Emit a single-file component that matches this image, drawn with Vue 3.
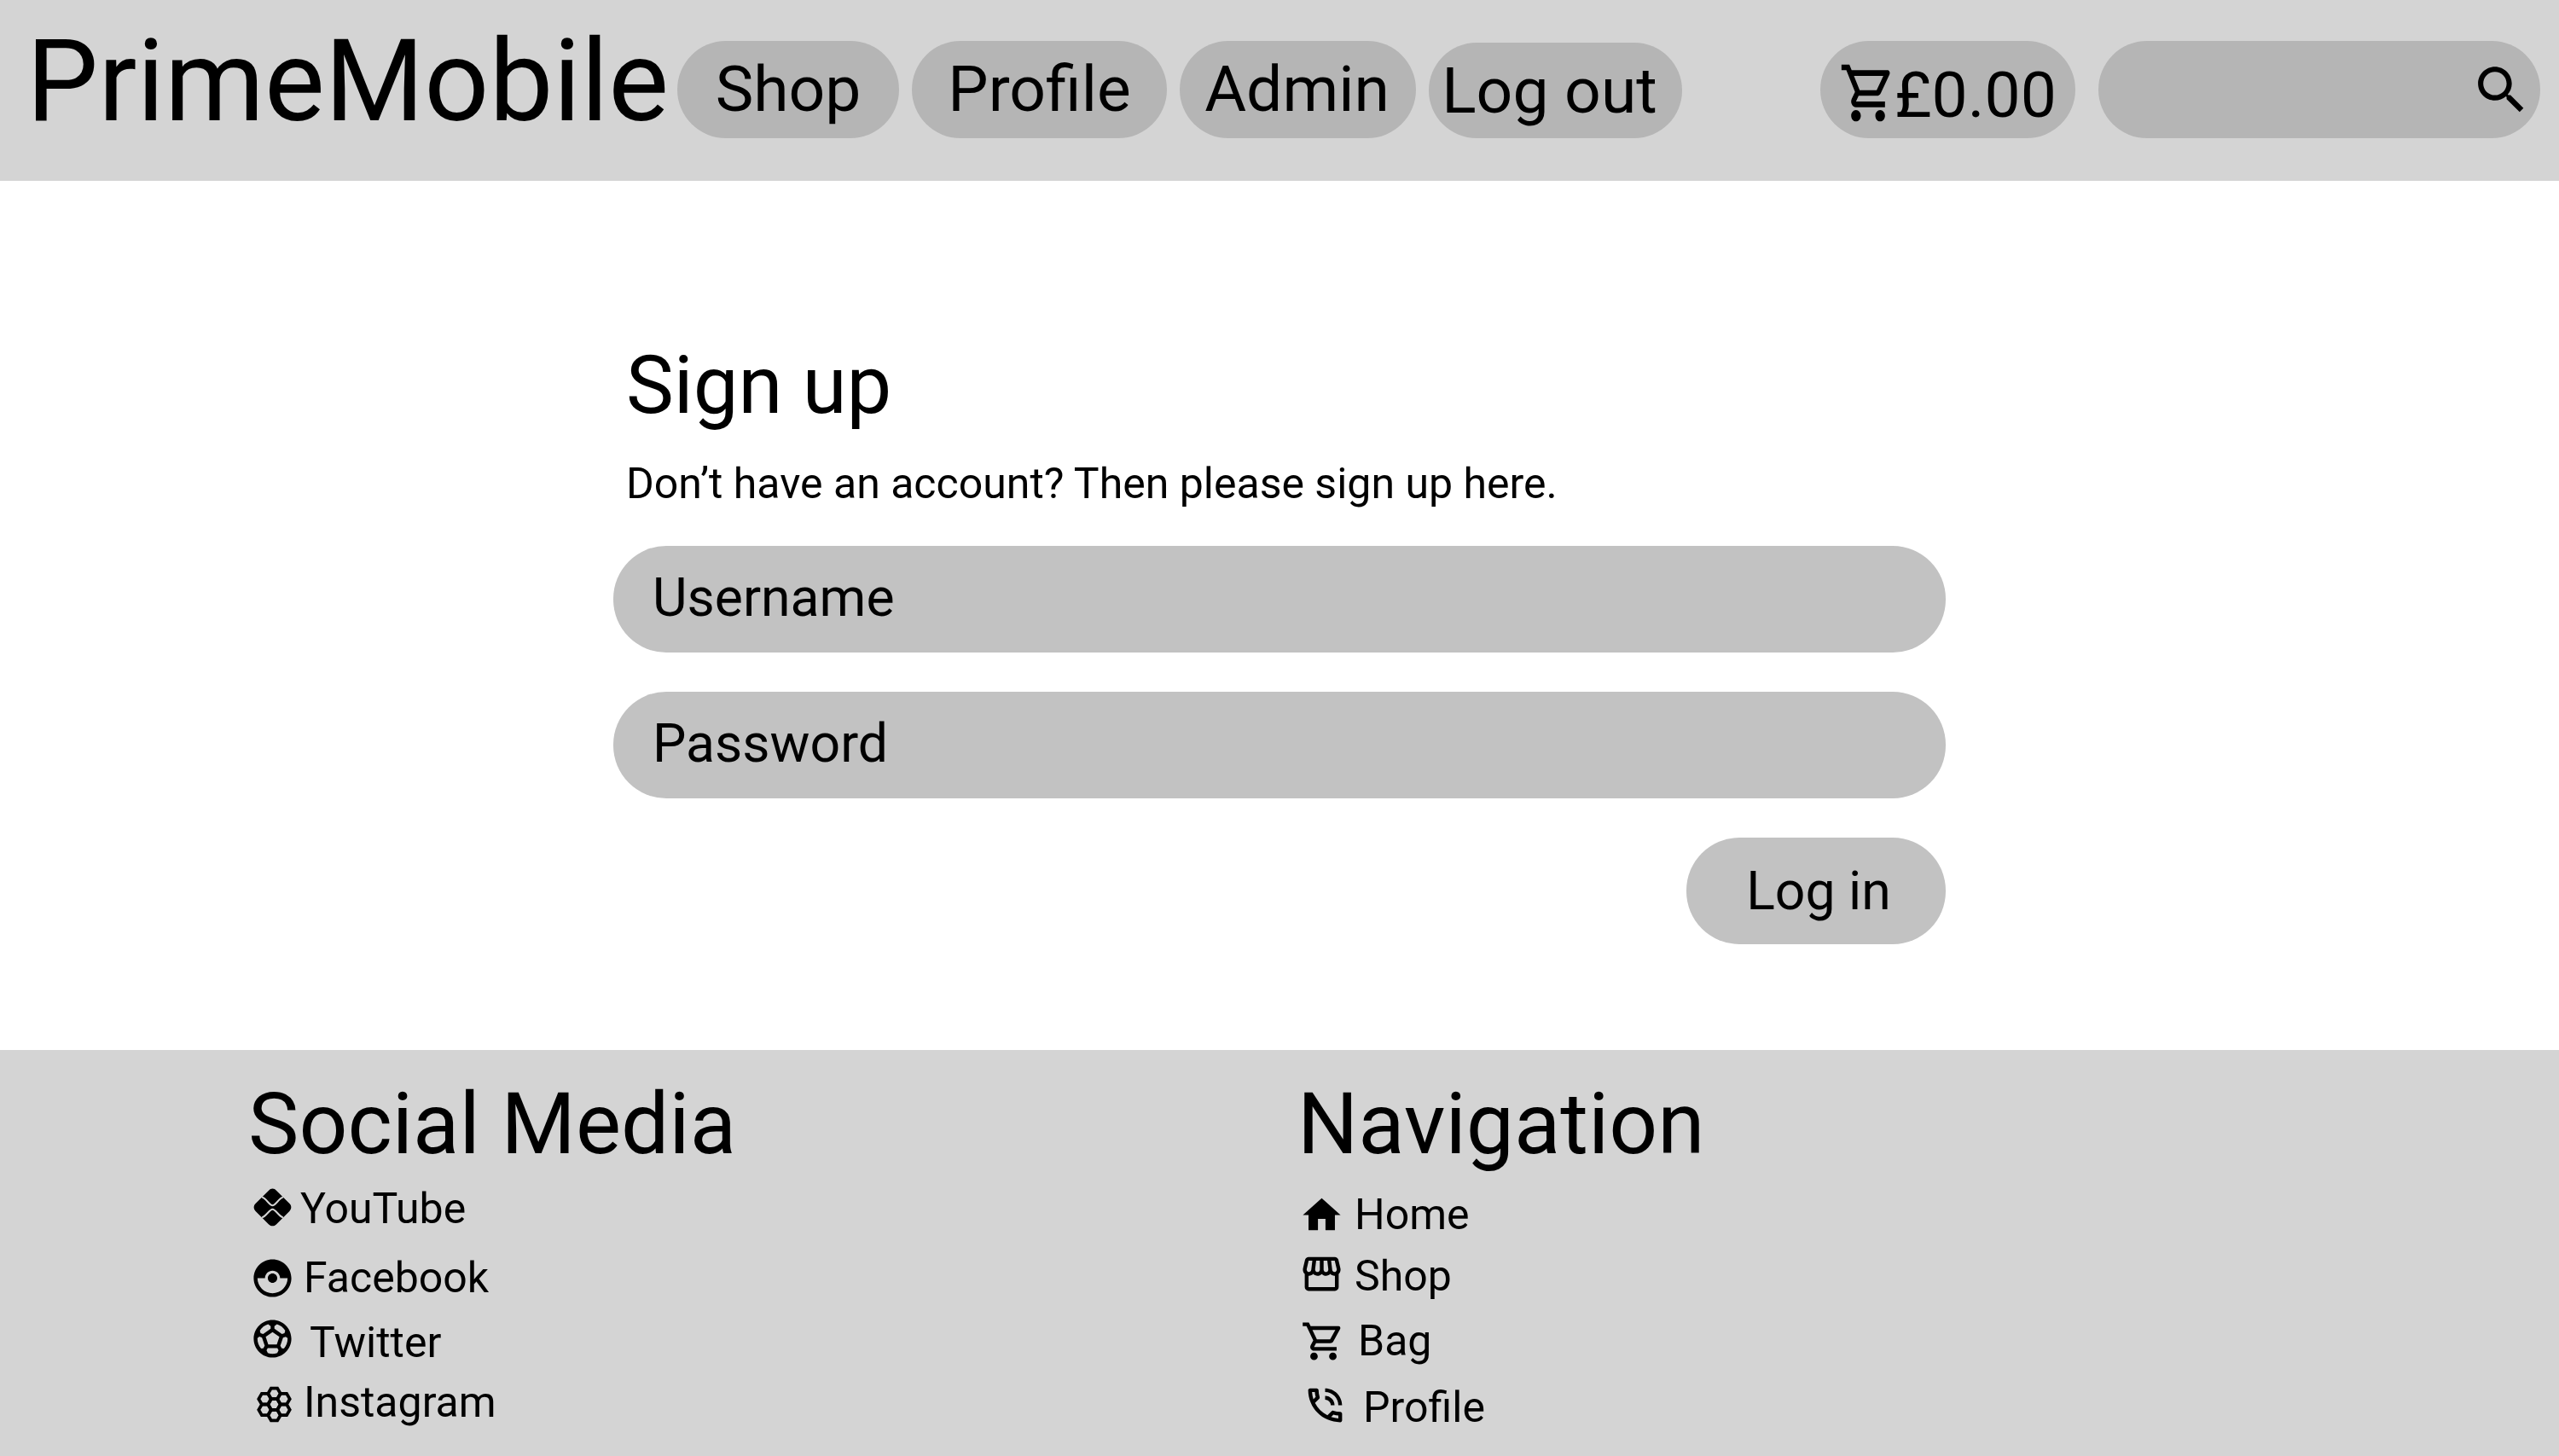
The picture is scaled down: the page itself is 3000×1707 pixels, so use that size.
<script setup>
const navLinks = [
  { label: 'Shop', cls: 'nav-shop' },
  { label: 'Profile', cls: 'nav-profile' },
  { label: 'Admin', cls: 'nav-admin' },
  { label: 'Log out', cls: 'nav-logout' },
]

const cartPath = 'M15.55 13c.75 0 1.41-.41 1.75-1.03l3.58-6.49c.37-.66-.11-1.48-.87-1.48H5.21l-.94-2H1v2h2l3.6 7.59-1.35 2.44C4.52 15.37 5.48 17 7 17h12v-2H7l1.1-2h7.45zM6.16 6h12.15l-2.76 5H8.53L6.16 6zM7 18c-1.1 0-1.99.9-1.99 2S5.9 22 7 22s2-.9 2-2-.9-2-2-2zm10 0c-1.1 0-1.99.9-1.99 2s.89 2 1.99 2 2-.9 2-2-.9-2-2-2z'

const socialLinks = [
  { label: 'YouTube', cls: 'row-youtube', icon: 'diamond' },
  { label: 'Facebook', cls: 'row-facebook', path: 'M14.5 12c0 1.38-1.12 2.5-2.5 2.5S9.5 13.38 9.5 12s1.12-2.5 2.5-2.5 2.5 1.12 2.5 2.5zm7.5 0c0 5.52-4.48 10-10 10S2 17.52 2 12 6.48 2 12 2s10 4.48 10 10zm-2 0h-4c0-2.21-1.79-4-4-4s-4 1.79-4 4H4c0 4.41 3.59 8 8 8s8-3.59 8-8z' },
  { label: 'Twitter', cls: 'row-twitter', path: 'M12 2C6.48 2 2 6.48 2 12c0 5.52 4.48 10 10 10s10-4.48 10-10C22 6.48 17.52 2 12 2zM13 5.3l1.35-.95c1.82.56 3.37 1.76 4.38 3.34l-.39 1.34-1.35.46L13 6.7V5.3zM9.65 4.35L11 5.3v1.4L7.01 9.49 5.66 9.03 5.27 7.69C6.28 6.12 7.83 4.92 9.65 4.35zM7.08 17.11l-1.14.1C4.73 15.81 4 13.99 4 12c0-.12.01-.23.02-.35l1-.73L6.4 11.4l1.46 4.34L7.08 17.11zM14.5 19.59C13.71 19.85 12.87 20 12 20s-1.71-.15-2.5-.41l-.69-1.49L9.45 17h5.11l.64 1.11L14.5 19.59zM14.27 15H9.73l-1.35-4.02L12 8.44l3.63 2.54L14.27 15zM18.06 17.21l-1.14-.1-.79-1.37 1.46-4.34 1.39-.47 1 .73C19.99 11.77 20 11.88 20 12 20 13.99 19.27 15.81 18.06 17.21z' },
  { label: 'Instagram', cls: 'row-instagram', icon: 'hive' },
]

const pageLinks = [
  { label: 'Home', cls: 'row-home', path: 'M10 20v-6h4v6h5v-8h3L12 3 2 12h3v8z' },
  { label: 'Shop', cls: 'row-store', path: 'M21.9 8.89l-1.05-4.37c-.22-.9-1-1.52-1.91-1.52H5.05c-.9 0-1.69.63-1.9 1.52L2.1 8.89c-.24 1.02-.02 2.06.62 2.88.08.11.19.19.28.29V19c0 1.1.9 2 2 2h14c1.1 0 2-.9 2-2v-6.94c.09-.09.2-.18.28-.28.64-.82.87-1.87.62-2.89zm-2.99-3.9l1.05 4.37c.1.42.01.84-.25 1.17-.14.18-.44.47-.94.47-.61 0-1.14-.49-1.21-1.14L16.98 5l1.93-.01zM13 5h1.96l.54 4.52c.05.39-.07.78-.33 1.07-.22.26-.54.41-.95.41-.67 0-1.22-.59-1.22-1.31V5zM8.49 9.52L9.04 5H11v4.69c0 .72-.55 1.31-1.29 1.31-.34 0-.65-.15-.89-.41-.25-.29-.37-.68-.33-1.07zm-4.45-.16L5.05 5h1.97l-.58 4.86c-.08.65-.6 1.14-1.21 1.14-.49 0-.8-.29-.93-.47-.27-.32-.36-.75-.26-1.17zM5 19v-6.03c.08.01.15.03.23.03.87 0 1.66-.36 2.24-.95.6.6 1.4.95 2.31.95.87 0 1.65-.36 2.23-.93.59.57 1.39.93 2.29.93.84 0 1.64-.35 2.24-.95.58.59 1.37.95 2.24.95.08 0 .15-.02.23-.03V19H5z' },
  { label: 'Bag', cls: 'row-bag', path: cartPath },
  { label: 'Profile', cls: 'row-phone', path: 'M15 12h2c0-2.76-2.24-5-5-5v2c1.66 0 3 1.34 3 3zm4 0h2c0-4.97-4.03-9-9-9v2c3.87 0 7 3.13 7 7zm1 3.5c-1.25 0-2.45-.2-3.57-.57-.1-.03-.21-.05-.31-.05-.26 0-.51.1-.71.29l-2.2 2.2c-2.83-1.44-5.15-3.75-6.59-6.59l2.2-2.21c.28-.26.36-.65.25-1C8.7 6.45 8.5 5.25 8.5 4c0-.55-.45-1-1-1H4c-.55 0-1 .45-1 1 0 9.39 7.61 17 17 17 .55 0 1-.45 1-1v-3.5c0-.55-.45-1-1-1zM5.03 5h1.5c.07.88.22 1.75.45 2.58l-1.2 1.21c-.4-1.21-.66-2.47-.75-3.79zM19 18.97c-1.32-.09-2.6-.35-3.8-.76l1.2-1.2c.85.24 1.72.39 2.6.45v1.51z' },
]

const columns = [
  { title: 'Social Media', links: socialLinks },
  { title: 'Navigation', links: pageLinks },
]

// flat-top hexagons, one in the middle and six around it
const hiveCells = [
  [12, 12], [12, 6.28], [12, 17.72], [7.05, 9.14], [16.95, 9.14], [7.05, 14.86], [16.95, 14.86],
].map(([cx, cy]) => {
  const r = 3.3
  const h = r * 0.866
  return `${cx - r},${cy} ${cx - r / 2},${cy - h} ${cx + r / 2},${cy - h} ${cx + r},${cy} ${cx + r / 2},${cy + h} ${cx - r / 2},${cy + h}`
})
</script>

<template>
  <div class="page">
    <header class="topbar">
      <h1 class="brand">PrimeMobile</h1>
      <nav class="nav">
        <a v-for="link in navLinks" :key="link.label" class="pill" :class="link.cls">{{ link.label }}</a>
      </nav>
      <a class="pill cart">
        <svg class="cart-icon" viewBox="0 0 24 24" preserveAspectRatio="none"><path :d="cartPath" /></svg>
        <span>£0.00</span>
      </a>
      <div class="pill search">
        <svg class="search-icon" viewBox="0 0 24 24">
          <path d="M15.5 14h-.79l-.28-.27C15.41 12.59 16 11.11 16 9.5 16 5.91 13.09 3 9.5 3S3 5.91 3 9.5 5.91 16 9.5 16c1.61 0 3.09-.59 4.23-1.57l.27.28v.79l5 4.99L20.49 19l-4.99-5zm-6 0C7.01 14 5 11.99 5 9.5S7.01 5 9.5 5 14 7.01 14 9.5 11.99 14 9.5 14z" />
        </svg>
      </div>
    </header>

    <main class="content">
      <form class="signup" @submit.prevent>
        <h2 class="signup-title">Sign up</h2>
        <p class="signup-text">Don’t have an account? Then please sign up here.</p>
        <input class="field" type="text" placeholder="Username" />
        <input class="field" type="password" placeholder="Password" />
        <button class="submit" type="submit">Log in</button>
      </form>
    </main>

    <footer class="footer">
      <section v-for="col in columns" :key="col.title" class="footer-col">
        <h2 class="footer-title">{{ col.title }}</h2>
        <a v-for="link in col.links" :key="link.label" class="footer-row" :class="link.cls">
          <svg class="footer-icon" viewBox="0 0 24 24">
            <template v-if="link.icon === 'diamond'">
              <path d="M12 2c.8 0 1.4.4 2 1l7 7c1.2 1.2 1.2 2.8 0 4l-7 7c-1.2 1.2-2.8 1.2-4 0l-7-7c-1.2-1.2-1.2-2.8 0-4l7-7c.6-.6 1.2-1 2-1z" />
              <path class="diamond-cut" d="M6.4 6.6C8.6 7.2 10.4 11 12 11s3.4-3.8 5.6-4.4M6.4 17.4C8.6 16.8 10.4 13 12 13s3.4 3.8 5.6 4.4" />
            </template>
            <template v-else-if="link.icon === 'hive'">
              <polygon v-for="cell in hiveCells" :key="cell" class="hive-cell" :points="cell" />
            </template>
            <path v-else :d="link.path" />
          </svg>
          <span>{{ link.label }}</span>
        </a>
      </section>
    </footer>
  </div>
</template>

<style>
html, body {
  margin: 0;
  background: #fff;
}
</style>

<style scoped>
.page {
  display: flex;
  flex-direction: column;
  height: 1707px;
  overflow: hidden;
  font-family: Roboto, "Liberation Sans", sans-serif;
  color: #000;
}

.topbar {
  display: flex;
  align-items: flex-start;
  height: 212px;
  box-sizing: border-box;
  flex-shrink: 0;
  padding: 0 22px 0 31px;
  background: #d4d4d4;
}

.brand {
  margin: 18px 0 0;
  width: 763px;
  font-size: 133.5px;
  font-weight: 400;
  line-height: 155px;
  white-space: nowrap;
}

.nav {
  display: flex;
  gap: 15px;
  margin-top: 48px;
  height: 114px;
}

.pill {
  display: flex;
  align-items: center;
  justify-content: center;
  box-sizing: border-box;
  height: 114px;
  padding-bottom: 2px;
  border-radius: 57px;
  background: #b5b5b5;
  font-size: 75px;
  line-height: 1;
}

.nav-shop { width: 260px; }
.nav-profile { width: 299px; }
.nav-admin {
  width: 277px;
  padding-right: 2px;
}
.nav-logout {
  width: 297px;
  height: 112px;
  margin-top: 2px;
  padding: 0 14px 0 0;
}

.cart {
  width: 299px;
  margin: 48px 0 0 162px;
  padding: 0 0 0 10px;
  justify-content: flex-start;
}

.cart-icon {
  width: 68px;
  height: 80px;
  margin: 8px 0 0 12px;
  flex-shrink: 0;
}

.cart span {
  margin: 12px 0 0 -3px;
}

.search {
  width: 518px;
  margin: 48px 0 0 27px;
  justify-content: flex-end;
  padding: 0 9px 0 0;
}

.search-icon {
  width: 73px;
  height: 73px;
}

.content {
  flex: 1;
  display: flex;
  justify-content: center;
}

.signup {
  display: flex;
  flex-direction: column;
  width: 1562px;
  padding-top: 186px;
}

.signup-title {
  margin: 0 0 0 15px;
  font-size: 94px;
  font-weight: 400;
  line-height: 108px;
}

.signup-text {
  margin: 32px 0 0 15px;
  font-size: 50px;
  line-height: 59px;
}

.field {
  box-sizing: border-box;
  height: 125px;
  margin-top: 46px;
  padding: 0 46px 4px;
  border: none;
  border-radius: 62px;
  outline: none;
  background: #c2c2c2;
  color: #000;
  font-family: inherit;
  font-size: 62.5px;
}

.signup-text + .field {
  margin-top: 43px;
}

.field::placeholder {
  color: #000;
  opacity: 1;
}

.submit {
  align-self: flex-end;
  width: 304px;
  height: 125px;
  margin-top: 46px;
  padding: 0 0 0 6px;
  border: none;
  border-radius: 62px;
  background: #c2c2c2;
  color: #000;
  font-family: inherit;
  font-size: 62.5px;
}

.footer {
  display: grid;
  grid-template-columns: 1230px 1fr;
  flex-shrink: 0;
  height: 476px;
  box-sizing: border-box;
  padding: 28px 0 0 293px;
  background: #d4d4d4;
}

.footer-title {
  margin: 0 0 0 -2px;
  font-size: 100px;
  font-weight: 400;
  line-height: 117px;
}

.footer-row {
  display: flex;
  align-items: center;
  height: 60px;
  font-size: 50px;
  line-height: 60px;
}

.footer-icon {
  width: 53px;
  height: 53px;
  flex-shrink: 0;
}

.diamond-cut {
  fill: none;
  stroke: #d4d4d4;
  stroke-width: 0.9;
}

.hive-cell {
  fill: none;
  stroke: #000;
  stroke-width: 1.7;
}

.row-youtube { margin-top: 11px; gap: 6px; }
.row-youtube .footer-icon { margin-bottom: 3px; }
.row-facebook { margin-top: 21px; gap: 10px; }
.row-twitter { margin-top: 16px; gap: 17px; }
.row-twitter .footer-icon { margin-bottom: 9px; }
.row-instagram { margin-top: 10px; margin-left: 2px; gap: 8px; }
.row-instagram .footer-icon { margin-top: 5px; }
.row-home { margin-top: 18px; gap: 12px; }
.row-store { margin-top: 12px; gap: 12px; }
.row-store .footer-icon { margin-bottom: 5px; }
.row-bag { margin-top: 16px; margin-left: 2px; gap: 14px; }
.row-phone { margin-top: 18px; margin-left: 4px; gap: 18px; }
.row-phone .footer-icon { margin-bottom: 5px; }
</style>
